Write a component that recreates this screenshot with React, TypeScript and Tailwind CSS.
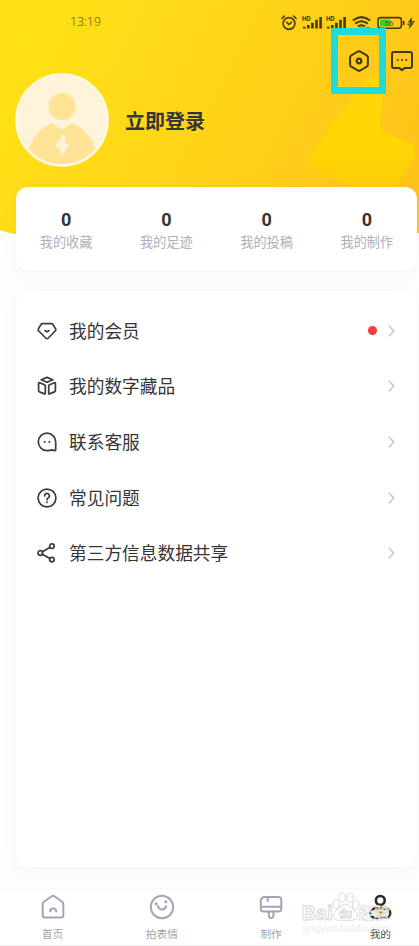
import type { ReactNode } from "react";

interface Stat {
    count: number;
    label: string;
};

interface MenuItem {
    label: string;
    icon: ReactNode;
    dot?: boolean;
};

interface Tab {
    label: string;
    icon: ReactNode;
    active?: boolean;
};

const stats: Stat[] = [
    { count: 0, label: "我的收藏" },
    { count: 0, label: "我的足迹" },
    { count: 0, label: "我的投稿" },
    { count: 0, label: "我的制作" },
];

function LineIcon({ children }: { children: ReactNode }) {
    return <svg className="h-5 w-5 shrink-0" viewBox="0 0 20 20" fill="none" stroke="#3b3b3d" strokeWidth="1.7" strokeLinecap="round" strokeLinejoin="round">
        {children}
    </svg>;
}

const menu: MenuItem[] = [
    {
        label: "我的会员",
        dot: true,
        icon: <LineIcon>
            <path d="M5.4 2.6h9.2q.8 0 1.2.6l2.7 4.4q.7 1.3-.3 2.4l-6.9 7q-1.3 1.2-2.6 0l-6.9-7q-1-1.1-.3-2.4l2.7-4.4q.4-.6 1.2-.6z" />
            <path d="M8 9.6q2 1.9 4 0" />
        </LineIcon>,
    },
    {
        label: "我的数字藏品",
        icon: <LineIcon>
            <path d="M4.2 3.8 10 1.4l5.8 2.4L10 6.2z" />
            <path d="M1.6 7.4q0-1 1-.6l4.800 2q.9.4.9 1.300v7.200q0 1-.9.6l-4.900-2q-.9-.4-.9-1.300z" />
            <path d="M18.400 7.400q0-1-1-.6l-4.800 2q-.9.4-.9 1.300v7.200q0 1 .9.6l4.900-2q.9-.4.9-1.300z" />
        </LineIcon>,
    },
    {
        label: "联系客服",
        icon: <LineIcon>
            <path d="M10 18.6A8.700 8.700 0 1 1 18.700 10v7.400q0 1.300-1.300 1.200l-2.400-.7q-2 .7-5 .7z" />
            <path d="M7.600 10h.01M12.400 10h.01" strokeWidth="2.100" />
        </LineIcon>,
    },
    {
        label: "常见问题",
        icon: <LineIcon>
            <circle cx="10" cy="10" r="8.9" />
            <path d="M7.6 7.8a2.400 2.400 0 1 1 3.700 2q-1.300.8-1.300 1.900" />
            <path d="M10 14.300h.01" strokeWidth="1.900" />
        </LineIcon>,
    },
    {
        label: "第三方信息数据共享",
        icon: <LineIcon>
            <circle cx="3.300" cy="10" r="2.300" />
            <circle cx="14.900" cy="3.200" r="2.300" />
            <circle cx="14.900" cy="16.600" r="2.300" />
            <path d="m5.400 8.800 7.400-4.300M5.400 11.200l7.400 4.200" />
        </LineIcon>,
    },
];

function TabIcon({ children }: { children: ReactNode }) {
    return <svg className="h-7 w-7" viewBox="0 0 28 28" fill="none" stroke="#a2a6b2" strokeWidth="2" strokeLinecap="round" strokeLinejoin="round">
        {children}
    </svg>;
}

const tabs: Tab[] = [
    {
        label: "首页",
        icon: <TabIcon>
            <path d="M12.700 3.300 4.900 8.800q-1.200.9-1.200 2.300v11.200q0 2.300 2.300 2.300h16q2.300 0 2.300-2.300V11.100q0-1.400-1.200-2.300l-7.800-5.500q-1.300-.9-2.600 0z" />
            <path d="M11.200 18.600q0-3 3-3t3 3" />
        </TabIcon>,
    },
    {
        label: "拍表情",
        icon: <TabIcon>
            <circle cx="14" cy="14" r="11.200" />
            <path d="M9.800 13.100q1.200 3.400 4.300 3.400t4.100-3.400" />
            <path d="M8.200 10.700h.01M17.800 8.800h.01" strokeWidth="3" />
        </TabIcon>,
    },
    {
        label: "制作",
        icon: <TabIcon>
            <path d="M8.300 4h13.300q2.700 0 2.700 2.700v9q0 2.700-2.700 2.700H6.500q-2.700 0-2.700-2.700V8.500Q3.800 4 8.300 4z" />
            <path d="M4 13.700h20M10.700 4.200V8M11.800 18.500v4q0 2.500 2.300 2.500t2.300-2.500v-4" />
        </TabIcon>,
    },
    {
        label: "我的",
        active: true,
        icon: <svg className="h-7 w-7" viewBox="0 0 28 28" fill="none" stroke="#29292b" strokeWidth="2.600">
            <path d="M11 10h6.600l4 8-8 6-6-6z" fill="#ffdc24" stroke="none" />
            <circle cx="14.300" cy="7.400" r="4.400" fill="#fff" />
            <path d="M9 15.500h10.600a4.600 4.600 0 0 1 0 9.200H9a4.600 4.600 0 0 1 0-9.200z" />
            <path d="M14.300 18v3.500" strokeWidth="2" />
        </svg>,
    },
];

function Signal() {
    return <svg className="h-4 w-[22px]" viewBox="0 0 22 16">
        <text x="0" y="5.500" fontSize="6.500" fontWeight="700" fontFamily="Roboto, sans-serif" fill="#453b10">HD</text>
        <path d="M2.300 13.500v-1.800M6.300 13.500V10M10.400 13.500V7.700M14.500 13.500V4.800M18.600 13.500V2" stroke="#453b10" strokeWidth="2.600" />
    </svg>;
}

function StatusBar() {
    return <div className="flex h-[45px] items-center pr-1 pl-[70px] text-[#6b5a12]">
        <span className="flex-1 font-['Noto_Sans'] text-[12.5px] font-light tracking-[-0.2px]">13:19</span>
        <svg className="mr-[5px] h-4 w-4" viewBox="0 0 16 16" fill="none" stroke="#453b10" strokeWidth="1.600" strokeLinecap="round">
            <circle cx="8" cy="8.500" r="5.900" />
            <path d="M5.800 7.400 8 9.500l2.400-2.100M.9 3.500 3.400 1.100M15.100 3.500l-2.500-2.400" />
        </svg>
        <span className="mr-[2px] flex"><Signal /></span>
        <span className="mr-[4px] flex"><Signal /></span>
        <svg className="mr-1.5 h-4 w-[19px]" viewBox="0 0 19 16" fill="none" stroke="#453b10" strokeWidth="2">
            <path d="M.8 5.500q8.700-6.700 17.400 0M3.200 8.600q6.300-4.700 12.600 0M5.900 11.500q3.600-2.700 7.200 0" />
            <circle cx="9.500" cy="13.200" r="1" fill="#453b10" stroke="none" />
            <path d="M15 12v2M17 12v2" strokeWidth="1" />
        </svg>
        <svg className="h-4 w-[28px]" viewBox="0 0 28 16">
            <rect x="1" y="2.600" width="23.400" height="10.600" rx="2.600" fill="none" stroke="#453b10" strokeWidth="1.600" />
            <rect x="3" y="4.500" width="10.500" height="6.800" rx="1" fill="#39cf27" />
            <path d="M26.600 6v4" stroke="#453b10" strokeWidth="1.800" />
            <text x="7.600" y="10.800" fontSize="7.800" fontFamily="Roboto, sans-serif" fill="#5d6512">56</text>
        </svg>
        <svg className="ml-[2px] h-3 w-[8px]" viewBox="0 0 8 12" fill="#453b10">
            <path d="M4.900 0 1 5.200h2.100L1.700 12l5.200-5.700H4.800zM.5 6.500h3v1.400h-3zM4.500 4h3v1.400h-3z" />
        </svg>
    </div>;
}

function Backdrop() {
    return <svg className="absolute top-0 left-0 h-[240px] w-full" viewBox="0 0 419 240" preserveAspectRatio="none">
        <defs>
            <linearGradient id="sky" gradientUnits="userSpaceOnUse" x1="0" y1="0" x2="390" y2="210">
                <stop offset="0" stopColor="#ffe316" />
                <stop offset=".5" stopColor="#ffd618" />
                <stop offset="1" stopColor="#ffc31a" />
            </linearGradient>
            <linearGradient id="bolt" x1="0" y1="0" x2="0" y2="1">
                <stop offset="0" stopColor="#ffd60c" />
                <stop offset=".55" stopColor="#ffd602" />
                <stop offset="1" stopColor="#ffcd0a" />
            </linearGradient>
        </defs>
        <path d="M0 0h419v233q-209 14-403 1Q8 233 0 230z" fill="url(#sky)" />
        <path d="M362 83q5-8 12-8 10 1 9 14l-3 34q-1 8 7 11l20 7q11 4 7 16l-19 33h-36l-43-19q-9-6-4-19z" fill="url(#bolt)" />
    </svg>;
}

function Avatar() {
    return <svg className="h-[94px] w-[94px]" viewBox="0 0 94 94">
        <circle cx="47" cy="47" r="45.800" fill="#fff4d9" stroke="#fffbe8" strokeWidth="2" />
        <circle cx="47" cy="33.500" r="13.500" fill="#ffe397" />
        <path d="M14 76q4-17 23-26l7 5q3 2 6 0l7-5q19 9 23 26-13 15-33 15T14 76z" fill="#ffe397" />
        <path d="m47.500 62.500-6.800 9.500q-.8 1.500.8 2l3.500 1v6.500q1.500 1 2.500-.5l6-8q1-2-1-2.500l-3-.8.800-6.500q-.8-2-2.800-.7z" fill="#fff4d9" />
    </svg>;
}

function Chevron() {
    return <svg className="h-3 w-[7px]" viewBox="0 0 7 12" fill="none" stroke="#cbcbce" strokeWidth="1.700">
        <path d="m1 .8 4.600 5.200L1 11.200" />
    </svg>;
}

function Watermark() {
    return <svg className="pointer-events-none absolute top-0 left-[300px] h-[58px] w-[119px]" viewBox="0 0 119 58">
        <g fill="#fff" fillOpacity=".75" stroke="#d6d6d6" strokeWidth=".9" fontFamily="'Liberation Sans', 'Noto Sans CJK SC', sans-serif" fontWeight="700">
            <text x="1.500" y="31" fontSize="20" textLength="31" lengthAdjust="spacingAndGlyphs">Bai</text>
            <ellipse cx="36" cy="15" rx="3.200" ry="4.500" />
            <ellipse cx="42.200" cy="8.400" rx="3.200" ry="4.700" />
            <ellipse cx="50" cy="8.600" rx="3.200" ry="4.500" />
            <ellipse cx="55.700" cy="16" rx="3.200" ry="4.500" />
            <path d="M41 17q4.500-3.700 9 0l7 7q2 7-5 7.300H38q-6.500-1.500-4-7.300z" />
            <text x="39" y="28.500" fontSize="12" textLength="13" lengthAdjust="spacingAndGlyphs">du</text>
            <text x="58.500" y="29.500" fontSize="15.500" strokeWidth=".6">经验</text>
            <text x="2.500" y="42.500" fontSize="10.500" fill="#ececec" stroke="none" textLength="88" lengthAdjust="spacingAndGlyphs">jingyan.baidu.com</text>
        </g>
    </svg>;
}

export default function App() {
    return <div className="relative flex h-[946px] w-full flex-col overflow-hidden bg-[#fdfdfd] font-['Roboto','Noto_Sans_CJK_SC',sans-serif] text-[#353537]">
        <Backdrop />
        <header className="relative h-[187px]">
            <StatusBar />
            <div className="flex h-8 items-center justify-end gap-5 pr-[5px]">
                <svg className="h-[22px] w-[22px]" viewBox="0 0 22 22" fill="none" stroke="#403610" strokeWidth="2" strokeLinejoin="round">
                    <path d="m9.900 1.500-6.600 3.800q-1.200.7-1.200 2v7.400q0 1.300 1.200 2l6.600 3.800q1.100.6 2.200 0l6.600-3.800q1.200-.7 1.200-2V7.300q0-1.300-1.200-2l-6.600-3.800q-1.100-.6-2.200 0z" />
                    <circle cx="11" cy="11" r="2.300" strokeWidth="2.200" />
                </svg>
                <svg className="h-[22px] w-6" viewBox="0 0 24 22" fill="none" stroke="#403610" strokeWidth="2" strokeLinejoin="round">
                    <path d="M4 2h16q2 0 2 2v12q0 2-2 2h-5.500L12 20.300 9.500 18H4q-2 0-2-2V4q0-2 2-2z" />
                    <path d="M7.700 10h.01M12 10h.01M16.300 10h.01" strokeWidth="2" strokeLinecap="round" />
                </svg>
            </div>
            <div className="-mt-1 flex items-center gap-4 pl-[15px]">
                <Avatar />
                <h1 className="pt-[3px] text-[20px] font-bold">立即登录</h1>
            </div>
            <div className="absolute top-7 left-[331px] h-[66px] w-[55px] border-[7px] border-[#1bdde0]" />
        </header>

        <section className="relative mr-0.5 ml-4 grid h-[83px] shrink-0 grid-cols-4 rounded-xl bg-white pt-[23px] shadow-[0_3px_18px_rgba(0,0,0,0.035)]">
            {stats.map((s) => <div key={s.label} className="flex flex-col items-center">
                <span className="text-[18px] leading-5 font-bold">{s.count}</span>
                <span className="mt-[3px] text-[13.2px] leading-5 text-[#aeb1b9]">{s.label}</span>
            </div>)}
        </section>

        <section className="relative mt-[21px] mr-0.5 ml-4 h-[576px] shrink-0 rounded-xl bg-white pt-[12px] shadow-[0_3px_18px_rgba(0,0,0,0.035)]">
            {menu.map((m) => <div key={m.label} className="flex h-[55.6px] items-center pr-[22px] pl-[21px]">
                {m.icon}
                <span className="ml-[12px] flex-1 pt-[2px] text-[17.7px] leading-6">{m.label}</span>
                {m.dot && <span className="mr-[11px] h-[9px] w-[9px] rounded-full bg-[#f53b3e]" />}
                <Chevron />
            </div>)}
        </section>

        <nav className="relative mt-[21px] h-[58px] shrink-0 border-t border-[#f7f7f7] bg-white">
            <div className="-ml-[2px] flex h-[57px] w-[437px] border-b border-[#eaeaea]">
                {tabs.map((t) => <div key={t.label} className="flex flex-1 flex-col items-center pt-[4px]">
                    {t.icon}
                    <span className={t.active ? "mt-[6px] text-[10.7px] leading-4 text-[#4b4b4d]" : "mt-[6px] text-[10.7px] leading-4 text-[#a3a3a6]"}>{t.label}</span>
                </div>)}
            </div>
            <Watermark />
        </nav>
    </div>;
};
